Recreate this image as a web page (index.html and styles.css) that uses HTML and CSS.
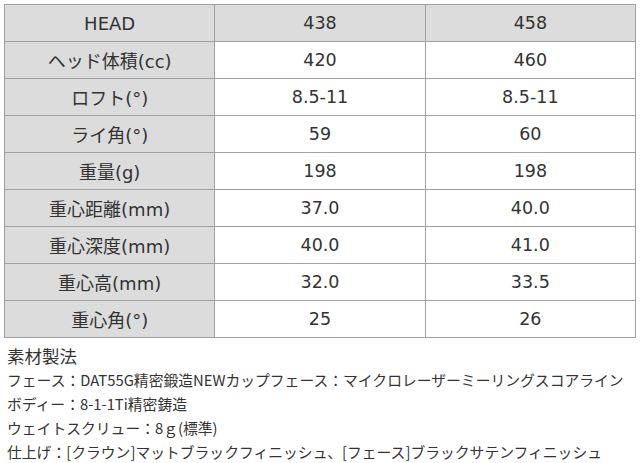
FILE: index.html
```html
<!DOCTYPE html>
<html lang="ja">
<head>
<meta charset="utf-8">
<link rel="stylesheet" href="styles.css">
</head>
<body>
<div class="page">
  <table class="spec">
    <tr class="head"><th>HEAD</th><td>438</td><td>458</td></tr>
    <tr><th>ヘッド体積(cc)</th><td>420</td><td>460</td></tr>
    <tr><th>ロフト(°)</th><td>8.5-11</td><td>8.5-11</td></tr>
    <tr><th>ライ角(°)</th><td>59</td><td>60</td></tr>
    <tr><th>重量(g)</th><td>198</td><td>198</td></tr>
    <tr><th>重心距離(mm)</th><td>37.0</td><td>40.0</td></tr>
    <tr><th>重心深度(mm)</th><td>40.0</td><td>41.0</td></tr>
    <tr><th>重心高(mm)</th><td>32.0</td><td>33.5</td></tr>
    <tr><th>重心角(°)</th><td>25</td><td>26</td></tr>
  </table>
  <div class="notes">
    <p class="title">素材製法</p>
    <p>フェース：DAT55G精密鍛造NEWカップフェース：マイクロレーザーミーリングスコアライン</p>
    <p>ボディー：8-1-1Ti精密鋳造</p>
    <p>ウェイトスクリュー：8ｇ(標準)</p>
    <p>仕上げ：[クラウン]マットブラックフィニッシュ、[フェース]ブラックサテンフィニッシュ</p>
  </div>
</div>
</body>
</html>
```

FILE: styles.css
```css
html, body {
  margin: 0;
  padding: 0;
  background: #fff;
}
.page {
  padding: 4px 4px 0 4px;
  color: #333;
  font-family: "DejaVu Sans", "Noto Sans CJK JP", sans-serif;
}
.spec {
  width: 632px;
  border-collapse: collapse;
  table-layout: fixed;
  border: 1px solid #a0a0a0;
}
.spec th, .spec td {
  border: 1px solid #a0a0a0;
  height: 36px;
  padding: 0;
  text-align: center;
  font-weight: normal;
  font-size: 17.5px;
  color: #333;
}
.spec th {
  background: #dcdcdc;
  font-size: 18px;
}
.spec .head td {
  background: #dcdcdc;
}
.notes {
  margin-top: 5px;
  padding-left: 3px;
  font-family: "Noto Sans CJK JP", sans-serif;
  font-size: 14.8px;
}
.notes p {
  margin: 0;
  line-height: 24px;
  white-space: nowrap;
}
.notes .title {
  font-size: 17.5px;
  line-height: 25px;
}
```
